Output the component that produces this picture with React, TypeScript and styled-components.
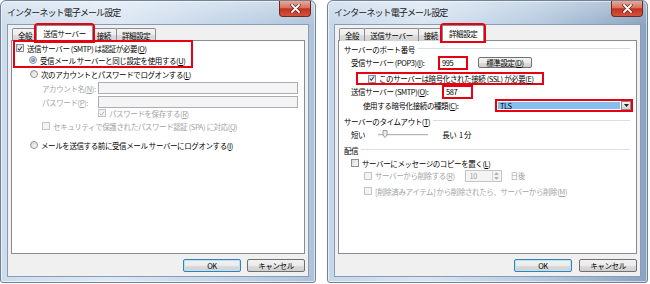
import React from 'react';
import styled, { createGlobalStyle, css } from 'styled-components';

const GlobalStyle = createGlobalStyle`
  html, body {
    margin: 0;
    padding: 0;
    background: #fff;
  }
  body {
    font-family: "Noto Sans CJK JP", "Noto Sans", sans-serif;
    font-size: 7.5px;
    letter-spacing: -0.4px;
    color: #000;
  }
`;

const RED = '#e60012';

const Page = styled.div`
  display: flex;
  gap: 11px;
  width: 650px;
  height: 284px;
`;

const Window = styled.div<{ $width: number; $dark?: boolean }>`
  width: ${(p) => p.$width}px;
  height: 283px;
  box-sizing: border-box;
  border: 1px solid #6f8298;
  border-radius: 6px 6px 3px 3px;
  box-shadow: inset 0 0 0 1px rgba(255, 255, 255, 0.55);
  padding: 0 6px 5px;
  display: flex;
  flex-direction: column;
  background: ${(p) =>
    p.$dark
      ? 'linear-gradient(180deg, rgba(255,255,255,0.3), rgba(255,255,255,0) 24px), linear-gradient(90deg, #c6d7e9 0%, #d9e5f2 30%, #b7cbe0 65%, #8aa3bf 100%)'
      : 'linear-gradient(180deg, rgba(255,255,255,0.35), rgba(255,255,255,0) 24px), linear-gradient(90deg, #cddcec 0%, #dde8f4 35%, #c3d5e8 70%, #aec3da 100%)'};
`;

const TitleBar = styled.div`
  height: 23px;
  display: flex;
  justify-content: space-between;
  align-items: flex-start;
`;

const Title = styled.div`
  font-size: 9px;
  letter-spacing: -0.9px;
  line-height: 23px;
  color: #1a1a1a;
`;

const CloseButton = styled.div`
  width: 32px;
  height: 16px;
  margin-right: -2px;
  box-sizing: border-box;
  border: 1px solid #6b2b24;
  border-top: none;
  border-radius: 0 0 4px 4px;
  background: linear-gradient(180deg, #e9a899 0%, #d8735f 45%, #c2321f 52%, #d4533d 100%);
  display: flex;
  align-items: center;
  justify-content: center;
`;

const Client = styled.div`
  flex: 1;
  background: #f0f0f0;
  border: 1px solid #8a9cb3;
  padding: 2px 3px 4px;
  display: flex;
  flex-direction: column;
`;

const TabStrip = styled.div`
  display: flex;
  align-items: flex-end;
  height: 14px;
  padding-left: 2px;
  margin-bottom: -1px;
  position: relative;
  z-index: 1;
`;

const Tab = styled.div<{ $active?: boolean; $mark?: boolean }>`
  height: 13px;
  box-sizing: border-box;
  padding: 0 5px;
  margin-left: -1px;
  border: 1px solid #898c95;
  border-bottom: none;
  border-radius: 2px 2px 0 0;
  background: linear-gradient(180deg, #f4f4f4 0%, #ececec 50%, #dddddd 51%, #d2d2d2 100%);
  display: flex;
  align-items: center;
  white-space: nowrap;
  ${(p) =>
    p.$active &&
    css`
      height: 16px;
      background: #fff;
      margin: 0 -1px 0 -2px;
      padding: 0 6px;
      position: relative;
      z-index: 2;
    `}
  ${(p) =>
    p.$mark &&
    css`
      outline: 2px solid ${RED};
    `}
`;

const Panel = styled.div`
  flex: 1;
  background: #fff;
  border: 1px solid #898c95;
  display: flex;
  flex-direction: column;
`;

const ButtonRow = styled.div<{ $gap: number }>`
  display: flex;
  justify-content: flex-end;
  gap: ${(p) => p.$gap}px;
  padding-top: 5px;
`;

const Button = styled.div<{ $default?: boolean; $w?: number; $h?: number }>`
  width: ${(p) => p.$w ?? 58}px;
  height: ${(p) => p.$h ?? 13}px;
  box-sizing: border-box;
  border: 1px solid #707070;
  border-radius: 2px;
  background: linear-gradient(180deg, #f2f2f2 0%, #ebebeb 50%, #dddddd 51%, #cfcfcf 100%);
  display: flex;
  align-items: center;
  justify-content: center;
  white-space: nowrap;
  ${(p) =>
    p.$default &&
    css`
      border-color: #3c7fb1;
      box-shadow: inset 0 0 0 1px #b5e4f8;
    `}
`;

const Row = styled.div<{ $indent?: number; $mt?: number; $h?: number }>`
  display: flex;
  align-items: center;
  gap: 3px;
  height: ${(p) => p.$h ?? 12}px;
  margin-left: ${(p) => p.$indent ?? 0}px;
  margin-top: ${(p) => p.$mt ?? 0}px;
  white-space: nowrap;
`;

const RedBox = styled.div<{ $indent?: number; $mt?: number; $w: number; $pl?: number }>`
  width: ${(p) => p.$w}px;
  box-sizing: border-box;
  border: 2px solid ${RED};
  margin-left: ${(p) => p.$indent ?? 0}px;
  margin-top: ${(p) => p.$mt ?? 0}px;
  padding-left: ${(p) => p.$pl ?? 0}px;
  position: relative;
  z-index: 3;
`;

const Text = styled.span<{ $disabled?: boolean; $w?: number }>`
  color: ${(p) => (p.$disabled ? '#a3a3a3' : '#000')};
  ${(p) =>
    p.$w !== undefined &&
    css`
      width: ${p.$w}px;
      flex: none;
    `}
`;

const Key = styled.span`
  text-decoration: underline;
`;

const Box = styled.span<{ $disabled?: boolean }>`
  width: 8px;
  height: 8px;
  flex: none;
  box-sizing: border-box;
  border: 1px solid ${(p) => (p.$disabled ? '#c4c4c4' : '#8e8f8f')};
  background: ${(p) =>
    p.$disabled ? '#f4f4f4' : 'linear-gradient(135deg, #dcdcdc, #fbfbfb)'};
  display: flex;
  align-items: center;
  justify-content: center;
`;

const Radio = styled.span<{ $on?: boolean }>`
  width: 8px;
  height: 8px;
  flex: none;
  box-sizing: border-box;
  border-radius: 50%;
  border: 1px solid #8e8f8f;
  background: linear-gradient(135deg, #d6d6d6, #fbfbfb);
  display: flex;
  align-items: center;
  justify-content: center;
  &::after {
    content: '';
    display: ${(p) => (p.$on ? 'block' : 'none')};
    width: 4px;
    height: 4px;
    border-radius: 50%;
    background: radial-gradient(circle at 35% 35%, #9cc7f2, #1f5fb8);
  }
`;

const Field = styled.div<{ $w: number; $disabled?: boolean; $red?: boolean }>`
  width: ${(p) => p.$w}px;
  height: ${(p) => ($p_red(p) ? 14 : 12)}px;
  box-sizing: border-box;
  border: ${(p) => (p.$red ? `2px solid ${RED}` : '1px solid #abadb3')};
  background: ${(p) => (p.$disabled ? '#f4f4f4' : '#fff')};
  display: flex;
  align-items: center;
  padding-left: 2px;
  flex: none;
`;

function $p_red(p: { $red?: boolean }) {
  return !!p.$red;
}

const GroupHeader = styled.div<{ $mt: number }>`
  display: flex;
  align-items: center;
  gap: 3px;
  height: 12px;
  margin: ${(p) => p.$mt}px 6px 0 5px;
  white-space: nowrap;
  &::after {
    content: '';
    flex: 1;
    border-top: 1px solid #d5dfe5;
    border-bottom: 1px solid #fff;
  }
`;

const Select = styled.div`
  width: 138px;
  height: 13px;
  box-sizing: border-box;
  border: 2px solid ${RED};
  display: flex;
  background: #fff;
  flex: none;
`;

const SelectValue = styled.div`
  flex: 1;
  margin: 1px;
  background: #86bfee;
  display: flex;
  align-items: center;
  padding-left: 2px;
`;

const DropButton = styled.div`
  width: 10px;
  box-sizing: border-box;
  border: 1px solid #8a8a8a;
  background: linear-gradient(180deg, #f2f2f2, #d4d4d4);
  display: flex;
  align-items: center;
  justify-content: center;
`;

const Spinner = styled.div`
  width: 37px;
  height: 12px;
  box-sizing: border-box;
  border: 1px solid #c6c6c6;
  background: #f4f4f4;
  display: flex;
  margin-left: 7px;
  flex: none;
`;

const SpinValue = styled.div`
  flex: 1;
  color: #a3a3a3;
  padding-left: 4px;
  display: flex;
  align-items: center;
`;

const SpinButtons = styled.div`
  width: 8px;
  display: flex;
  flex-direction: column;
  border-left: 1px solid #d4d4d4;
  & > span {
    flex: 1;
    display: flex;
    align-items: center;
    justify-content: center;
  }
`;

const Gap = styled.span<{ $w: number }>`
  width: ${(p) => p.$w}px;
  flex: none;
`;

const Check = () => (
  <svg width="7" height="7" viewBox="0 0 7 7">
    <path d="M1 3.6 L2.8 5.5 L6 1.2" fill="none" stroke="#24426f" strokeWidth="1.3" />
  </svg>
);

const DisabledCheck = () => (
  <svg width="7" height="7" viewBox="0 0 7 7">
    <path d="M1 3.6 L2.8 5.5 L6 1.2" fill="none" stroke="#a9a9a9" strokeWidth="1.1" />
  </svg>
);

const CloseX = () => (
  <svg width="11" height="9" viewBox="0 0 11 9">
    <path d="M2 1 L9 8 M9 1 L2 8" stroke="#5a2019" strokeWidth="3.2" strokeLinecap="round" />
    <path d="M2 1 L9 8 M9 1 L2 8" stroke="#fff" strokeWidth="1.8" strokeLinecap="round" />
  </svg>
);

const Arrow = ({ up, color = '#222' }: { up?: boolean; color?: string }) => (
  <svg width="5" height="3" viewBox="0 0 5 3">
    <path d={up ? 'M0 3 L2.5 0 L5 3 Z' : 'M0 0 L5 0 L2.5 3 Z'} fill={color} />
  </svg>
);

const Slider = () => (
  <svg width="50" height="10" viewBox="0 0 50 10">
    <line x1="0" y1="5.5" x2="50" y2="5.5" stroke="#b5b5b5" strokeWidth="1" />
    <line x1="0" y1="6.5" x2="50" y2="6.5" stroke="#eeeeee" strokeWidth="1" />
    <path d="M5 1.5 H9 V6 L7 8.5 L5 6 Z" fill="#ececec" stroke="#8a8a8a" strokeWidth="0.8" />
  </svg>
);

const WindowFrame = ({
  width,
  dark,
  gap,
  active,
  children,
}: {
  width: number;
  dark?: boolean;
  gap: number;
  active: number;
  children: React.ReactNode;
}) => {
  const tabs = ['全般', '送信サーバー', '接続', '詳細設定'];
  return (
    <Window $width={width} $dark={dark}>
      <TitleBar>
        <Title>インターネット電子メール設定</Title>
        <CloseButton>
          <CloseX />
        </CloseButton>
      </TitleBar>
      <Client>
        <TabStrip>
          {tabs.map((t, i) => (
            <Tab key={t} $active={i === active} $mark={i === active}>
              {t}
            </Tab>
          ))}
        </TabStrip>
        <Panel>{children}</Panel>
        <ButtonRow $gap={gap}>
          <Button $default>OK</Button>
          <Button>キャンセル</Button>
        </ButtonRow>
      </Client>
    </Window>
  );
};

const OutgoingServer = () => (
  <>
    <RedBox $indent={1} $mt={-1} $w={180}>
      <Row $indent={1}>
        <Box>
          <Check />
        </Box>
        <Text>
          送信サーバー (SMTP) は認証が必要(<Key>O</Key>)
        </Text>
      </Row>
      <Row $indent={14}>
        <Radio $on />
        <Text>
          受信メール サーバーと同じ設定を使用する(<Key>U</Key>)
        </Text>
      </Row>
    </RedBox>
    <Row $indent={18}>
      <Radio />
      <Text>
        次のアカウントとパスワードでログオンする(<Key>L</Key>)
      </Text>
    </Row>
    <Row $indent={30} $mt={2}>
      <Text $disabled $w={53}>
        アカウント名(<Key>N</Key>):
      </Text>
      <Field $w={200} $disabled />
    </Row>
    <Row $indent={30} $mt={2}>
      <Text $disabled $w={53}>
        パスワード(<Key>P</Key>):
      </Text>
      <Field $w={200} $disabled />
    </Row>
    <Row $indent={86} $h={10}>
      <Box $disabled>
        <DisabledCheck />
      </Box>
      <Text $disabled>
        パスワードを保存する(<Key>R</Key>)
      </Text>
    </Row>
    <Row $indent={30} $mt={2}>
      <Box $disabled />
      <Text $disabled>
        セキュリティで保護されたパスワード認証 (SPA) に対応(<Key>Q</Key>)
      </Text>
    </Row>
    <Row $indent={18} $mt={7}>
      <Radio />
      <Text>
        メールを送信する前に受信メール サーバーにログオンする(<Key>I</Key>)
      </Text>
    </Row>
  </>
);

const Advanced = () => (
  <>
    <GroupHeader $mt={2}>サーバーのポート番号</GroupHeader>
    <Row $indent={12} $h={15} $mt={0}>
      <Text $w={84}>
        受信サーバー (POP3)(<Key>I</Key>):
      </Text>
      <Field $w={30} $red>
        995
      </Field>
      <Gap $w={4} />
      <Button $w={54} $h={11}>
        標準設定(<Key>D</Key>)
      </Button>
    </Row>
    <RedBox $indent={17} $mt={2} $w={188} $pl={10}>
      <Row $h={9}>
        <Box>
          <Check />
        </Box>
        <Text>
          このサーバーは暗号化された接続 (SSL) が必要(<Key>E</Key>)
        </Text>
      </Row>
    </RedBox>
    <Row $indent={12} $h={13}>
      <Text $w={88}>
        送信サーバー (SMTP)(<Key>O</Key>):
      </Text>
      <Field $w={31} $red>
        587
      </Field>
    </Row>
    <Row $indent={24} $h={13} $mt={1}>
      <Text $w={129}>
        使用する暗号化接続の種類(<Key>C</Key>):
      </Text>
      <Select>
        <SelectValue>TLS</SelectValue>
        <DropButton>
          <Arrow />
        </DropButton>
      </Select>
    </Row>
    <GroupHeader $mt={3}>
      <span>
        サーバーのタイムアウト(<Key>T</Key>)
      </span>
    </GroupHeader>
    <Row $indent={12} $mt={1}>
      <Text>短い</Text>
      <Gap $w={7} />
      <Slider />
      <Gap $w={8} />
      <Text>長い&nbsp;&nbsp;1 分</Text>
    </Row>
    <GroupHeader $mt={4}>配信</GroupHeader>
    <Row $indent={12} $mt={1}>
      <Box />
      <Text>
        サーバーにメッセージのコピーを置く(<Key>L</Key>)
      </Text>
    </Row>
    <Row $indent={25} $h={13}>
      <Box $disabled />
      <Text $disabled>
        サーバーから削除する(<Key>R</Key>)
      </Text>
      <Spinner>
        <SpinValue>10</SpinValue>
        <SpinButtons>
          <span>
            <Arrow up color="#b5b5b5" />
          </span>
          <span>
            <Arrow color="#b5b5b5" />
          </span>
        </SpinButtons>
      </Spinner>
      <Gap $w={3} />
      <Text $disabled>日後</Text>
    </Row>
    <Row $indent={25} $mt={3}>
      <Box $disabled />
      <Text $disabled>
        [削除済みアイテム] から削除されたら、サーバーから削除(<Key>M</Key>)
      </Text>
    </Row>
  </>
);

export default function App() {
  return (
    <>
      <GlobalStyle />
      <Page>
        <WindowFrame width={316} gap={6} active={1}>
          <OutgoingServer />
        </WindowFrame>
        <WindowFrame width={321} dark gap={7} active={3}>
          <Advanced />
        </WindowFrame>
      </Page>
    </>
  );
}
